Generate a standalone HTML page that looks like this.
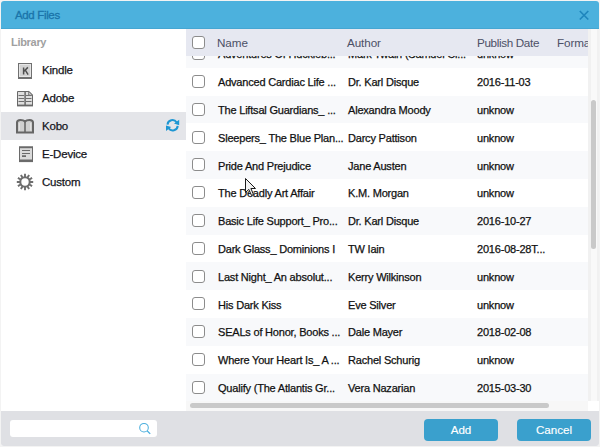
<!DOCTYPE html>
<html><head><meta charset="utf-8">
<style>
*{box-sizing:border-box;margin:0;padding:0}
html,body{width:600px;height:447px;overflow:hidden;background:#f3f3f3;font-family:"Liberation Sans",sans-serif}
.dlg{position:absolute;left:1px;top:1px;width:598px;height:445px;background:#fff;border-radius:3px;overflow:hidden}
.title{position:absolute;left:0;top:0;width:598px;height:28px;background:#4cb1dd;border-bottom:1px solid #45a6d2}
.title span{position:absolute;left:14px;top:8px;font-size:11.5px;color:#1a74aa;-webkit-text-stroke:0.3px #1a74aa;letter-spacing:-0.35px}
.close{position:absolute;left:577px;top:8px;width:12px;height:12px}
.side{position:absolute;left:0;top:28px;width:185px;height:382px;background:#fff}
.lib{position:absolute;left:10px;top:7px;font-size:11px;font-weight:bold;color:#a0a0a0;letter-spacing:-0.3px}
.item{position:absolute;left:0;width:185px;height:28px}
.item.sel{background:#e4e5e9}
.item .t{position:absolute;left:41px;top:8px;font-size:11.5px;color:#15151c;-webkit-text-stroke:0.25px #15151c;letter-spacing:-0.2px}
.item svg{position:absolute}
.tbl{position:absolute;left:185px;top:28px;width:413px;height:382px;overflow:hidden;background:#fff}
.hdr{position:absolute;left:0;top:0;width:402px;height:27px;background:#e6e8f1;z-index:2;overflow:hidden}
.hdr span{position:absolute;top:7px;font-size:11.7px;color:#4c5066;letter-spacing:-0.1px}
.cb{position:absolute;width:13px;height:13px;border:1.5px solid #8c8c8c;border-radius:3px;background:#fff}
.rows{position:absolute;left:0;top:27px;width:402px;height:345px;overflow:hidden}
.row{position:absolute;left:0;width:402px;height:27.8px;background:#fff}
.row.alt{background:#f8f9fb}
.row span{position:absolute;top:8.4px;font-size:11px;color:#111;-webkit-text-stroke:0.25px #111;white-space:nowrap;letter-spacing:-0.2px}
.vtrack{position:absolute;left:402px;top:0;width:11px;height:372px;background:linear-gradient(to right,#f1f1f1 0,#f1f1f1 3px,#f9f9f9 3px,#f9f9f9 9px,#f1f1f1 9px)}
.vthumb{position:absolute;left:405px;top:71px;width:5px;height:149px;background:#c9c9c9;border-radius:3px}
.htrack{position:absolute;left:0;top:372px;width:402px;height:10px;background:#f7f7f7}
.hthumb{position:absolute;left:4px;top:374px;width:359px;height:5px;background:#c9c9c9;border-radius:3px}
.corner{position:absolute;left:403px;top:372px;width:10px;height:10px;background:#fff}
.foot{position:absolute;left:0;top:410px;width:598px;height:35px;background:#dfe0e4}
.search{position:absolute;left:9px;top:9px;width:147px;height:17px;background:#fff;border-radius:3px}
.btn{position:absolute;top:8px;width:74px;height:22px;background:#3aa0cd;border-radius:4px;color:#fff;font-size:11.6px;text-align:center;line-height:22.4px;-webkit-text-stroke:0.15px #fff}
</style></head><body>
<div class="dlg">
  <div class="title"><span>Add Files</span>
    <svg class="close" viewBox="0 0 12 12"><path d="M1.8 2L10.3 10.5M10.3 2L1.8 10.5" stroke="#1f86bd" stroke-width="1.7"/></svg>
  </div>
  <div class="side">
    <div class="lib">Library</div>
    <div class="item" style="top:27px">
      <svg style="left:16px;top:6px" width="17" height="18" viewBox="0 0 17 18">
        <rect x="1.5" y="1.5" width="13" height="14.5" fill="#d2d2d2" stroke="#707070" stroke-width="1"/>
        <rect x="2.5" y="2.5" width="11" height="12" fill="none" stroke="#e6e6e6" stroke-width="1"/>
        <rect x="1" y="15" width="14" height="2" fill="#707070"/>
        <path d="M6.6 5.4V12.6M10.9 5.4L7 9.3M8.3 8.2L11.1 12.6" stroke="#505050" stroke-width="1.5" fill="none"/>
      </svg>
      <div class="t">Kindle</div>
    </div>
    <div class="item" style="top:55px">
      <svg style="left:15px;top:6px" width="18" height="17" viewBox="0 0 18 17">
        <path d="M1.5 1.5H13L16.5 5V15.5H1.5Z" fill="#dedede" stroke="#686868" stroke-width="1"/>
        <rect x="1" y="14.6" width="16" height="1.8" fill="#686868"/>
        <path d="M9.1 1.5V15" stroke="#686868" stroke-width="1.5"/>
        <path d="M2.5 5.5H8M2.5 8.5H8M2.5 11.5H8M10 8.5H15.5M10 11.5H15.5M10 5.5H15.5" stroke="#6e6e6e" stroke-width="1"/>
        <path d="M12.8 1.5V5.2H16.5Z" fill="#f0f0f0" stroke="#686868" stroke-width="1"/>
      </svg>
      <div class="t">Adobe</div>
    </div>
    <div class="item sel" style="top:83px">
      <svg style="left:14px;top:6px" width="20" height="16" viewBox="0 0 20 16">
        <path d="M2 14.5V4.5Q2 2 5.5 2Q8.5 2 10 3.5Q11.5 2 14.5 2Q18 2 18 4.5V14.5Z" fill="#cfcfcf" stroke="#666" stroke-width="2"/>
        <path d="M10 3.5V14.5" stroke="#666" stroke-width="1.6"/>
        <path d="M4.5 5V12.5M15.5 5V12.5" stroke="#e2e2e2" stroke-width="1"/>
      </svg>
      <div class="t">Kobo</div>
      <svg style="left:164px;top:5px" width="16" height="16" viewBox="0 0 16 16">
        <g transform="translate(-0.4,0.3)">
        <path d="M2.9 7.4A5 5 0 0 1 12 5" fill="none" stroke="#1e97d3" stroke-width="2"/>
        <path d="M9.4 6.2L14.6 7.9L14.6 2.4Z" fill="#1e97d3"/>
        <path d="M13.1 8.6A5 5 0 0 1 4 11" fill="none" stroke="#1e97d3" stroke-width="2"/>
        <path d="M6.6 9.8L1.4 8.1L1.4 13.6Z" fill="#1e97d3"/>
        </g>
      </svg>
    </div>
    <div class="item" style="top:111px">
      <svg style="left:17px;top:6px" width="16" height="17" viewBox="0 0 16 17">
        <rect x="1.5" y="1" width="13" height="14.6" fill="#dadada" stroke="#6a6a6a" stroke-width="1"/>
        <rect x="1" y="0.5" width="14" height="1.7" fill="#6a6a6a"/>
        <rect x="1" y="13.5" width="14" height="2.3" fill="#6a6a6a"/>
        <path d="M4 4.5H12M4 7.5H12" stroke="#6a6a6a" stroke-width="1.2"/>
        <path d="M4 10.1H8" stroke="#6a6a6a" stroke-width="1.6"/>
      </svg>
      <div class="t">E-Device</div>
    </div>
    <div class="item" style="top:139px">
      <svg style="left:14px;top:4px" width="20" height="20" viewBox="0 0 20 20">
        <path d="M14.50 10.00L18.20 10.00M13.90 12.25L17.10 14.10M12.25 13.90L14.10 17.10M10.00 14.50L10.00 18.20M7.75 13.90L5.90 17.10M6.10 12.25L2.90 14.10M5.50 10.00L1.80 10.00M6.10 7.75L2.90 5.90M7.75 6.10L5.90 2.90M10.00 5.50L10.00 1.80M12.25 6.10L14.10 2.90M13.90 7.75L17.10 5.90" stroke="#6e6e6e" stroke-width="1.9"/>
        <circle cx="10" cy="10" r="5.8" fill="#6e6e6e"/>
        <circle cx="10" cy="10" r="3.7" fill="#fff"/>
      </svg>
      <div class="t">Custom</div>
    </div>
  </div>
  <div class="tbl">
    <div class="hdr">
      <div class="cb" style="left:6px;top:7px"></div>
      <span style="left:31px">Name</span>
      <span style="left:161px">Author</span>
      <span style="left:291px;letter-spacing:-0.35px">Publish Date</span>
      <span style="left:371px">Forma</span>
    </div>
    <div class="rows" id="rows">
<!--ROWS-->
<div class="row alt" style="top:-16.0px"><div class="cb" style="left:6px;top:7.2px"></div><span style="left:32px">Adventures Of Huckleb...</span><span style="left:162px">Mark Twain (Samuel Cl...</span><span style="left:291px">unknow</span></div>
<div class="row" style="top:11.8px"><div class="cb" style="left:6px;top:7.2px"></div><span style="left:32px">Advanced Cardiac Life ...</span><span style="left:162px">Dr. Karl Disque</span><span style="left:291px">2016-11-03</span></div>
<div class="row alt" style="top:39.6px"><div class="cb" style="left:6px;top:7.2px"></div><span style="left:32px">The Liftsal Guardians_ ...</span><span style="left:162px">Alexandra Moody</span><span style="left:291px">unknow</span></div>
<div class="row" style="top:67.4px"><div class="cb" style="left:6px;top:7.2px"></div><span style="left:32px">Sleepers_ The Blue Plan...</span><span style="left:162px">Darcy Pattison</span><span style="left:291px">unknow</span></div>
<div class="row alt" style="top:95.2px"><div class="cb" style="left:6px;top:7.2px"></div><span style="left:32px">Pride And Prejudice</span><span style="left:162px">Jane Austen</span><span style="left:291px">unknow</span></div>
<div class="row" style="top:123.0px"><div class="cb" style="left:6px;top:7.2px"></div><span style="left:32px">The Deadly Art Affair</span><span style="left:162px">K.M. Morgan</span><span style="left:291px">unknow</span></div>
<div class="row alt" style="top:150.8px"><div class="cb" style="left:6px;top:7.2px"></div><span style="left:32px">Basic Life Support_ Pro...</span><span style="left:162px">Dr. Karl Disque</span><span style="left:291px">2016-10-27</span></div>
<div class="row" style="top:178.6px"><div class="cb" style="left:6px;top:7.2px"></div><span style="left:32px">Dark Glass_ Dominions I</span><span style="left:162px">TW Iain</span><span style="left:291px">2016-08-28T...</span></div>
<div class="row alt" style="top:206.4px"><div class="cb" style="left:6px;top:7.2px"></div><span style="left:32px">Last Night_ An absolut...</span><span style="left:162px">Kerry Wilkinson</span><span style="left:291px">unknow</span></div>
<div class="row" style="top:234.2px"><div class="cb" style="left:6px;top:7.2px"></div><span style="left:32px">His Dark Kiss</span><span style="left:162px">Eve Silver</span><span style="left:291px">unknow</span></div>
<div class="row alt" style="top:262.0px"><div class="cb" style="left:6px;top:7.2px"></div><span style="left:32px">SEALs of Honor, Books ...</span><span style="left:162px">Dale Mayer</span><span style="left:291px">2018-02-08</span></div>
<div class="row" style="top:289.8px"><div class="cb" style="left:6px;top:7.2px"></div><span style="left:32px">Where Your Heart Is_ A ...</span><span style="left:162px">Rachel Schurig</span><span style="left:291px">unknow</span></div>
<div class="row alt" style="top:317.6px"><div class="cb" style="left:6px;top:7.2px"></div><span style="left:32px">Qualify (The Atlantis Gr...</span><span style="left:162px">Vera Nazarian</span><span style="left:291px">2015-03-30</span></div>
<!--/ROWS-->
</div>
    <div class="vtrack"></div><div class="vthumb"></div>
    <div class="htrack"></div><div class="hthumb"></div><div class="corner"></div>
  </div>
  <div class="foot">
    <div class="search"><svg style="position:absolute;left:126px;top:-1px" width="18" height="18" viewBox="0 0 18 18"><circle cx="8" cy="8.7" r="4.3" fill="none" stroke="#4aaedd" stroke-width="1.05"/><path d="M11.1 11.8L14.2 14.9" stroke="#4aaedd" stroke-width="1.3"/></svg></div>
    <div class="btn" style="left:423px">Add</div>
    <div class="btn" style="left:516px">Cancel</div>
  </div>
</div>
<svg style="position:absolute;left:244px;top:177px;z-index:10" width="14" height="21" viewBox="0 0 14 21"><path d="M1.5 1.5V15.5L4.8 12.4L7.5 18.4L9.5 17.5L6.9 11.5H11.5Z" fill="#f2f2f2" stroke="#1a1a1a" stroke-width="1"/></svg>
</body></html>
